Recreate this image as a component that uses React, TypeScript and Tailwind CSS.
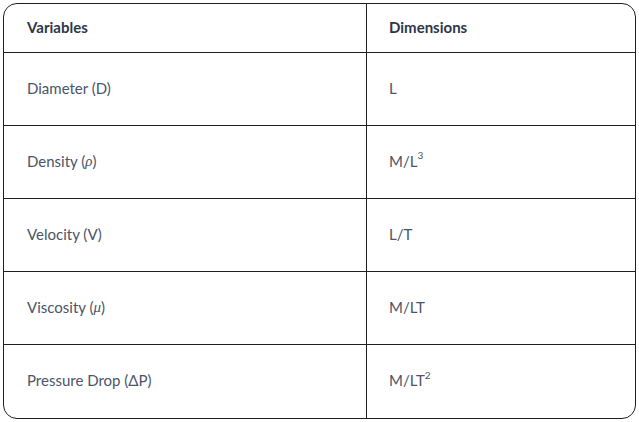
const rows: { v: React.ReactNode; d: React.ReactNode }[] = [
  { v: "Diameter (D)", d: "L" },
  { v: <>Density (<i className="font-serif">ρ</i>)</>, d: <>M/L<sup className="text-[10px] -top-[6px]">3</sup></> },
  { v: "Velocity (V)", d: "L/T" },
  { v: <>Viscosity (<i className="font-serif">μ</i>)</>, d: "M/LT" },
  { v: "Pressure Drop (ΔP)", d: <>M/LT<sup className="text-[10px] -top-[6px]">2</sup></> },
];

export default function App() {
  return (
    <div className="w-[639px] h-[422px] bg-white p-[3px]" style={{ fontFamily: "Lato, 'Noto Sans', sans-serif" }}>
      <div className="w-[633px] border border-[#1f1f1f] rounded-[14px] overflow-hidden">
        <div className="grid grid-cols-[363px_1fr] h-[49px] border-b border-[#1f1f1f]">
          <div className="flex items-center pl-[23px] pb-[2px] border-r border-[#1f1f1f] text-[15px] font-bold text-[#2d3748]">Variables</div>
          <div className="flex items-center pl-[22px] pb-[2px] text-[15px] font-bold text-[#2d3748]">Dimensions</div>
        </div>
        {rows.map((r, i) => (
          <div key={i} className={`grid grid-cols-[363px_1fr] h-[73px] ${i < rows.length - 1 ? "border-b border-[#1f1f1f]" : ""}`}>
            <div className="flex items-center pl-[23px] pb-[2px] border-r border-[#1f1f1f] text-[15px] text-[#4a5568]">{r.v}</div>
            <div className="flex items-center pl-[22px] pb-[2px] text-[15px] text-[#4a5568]">{r.d}</div>
          </div>
        ))}
      </div>
    </div>
  );
}
